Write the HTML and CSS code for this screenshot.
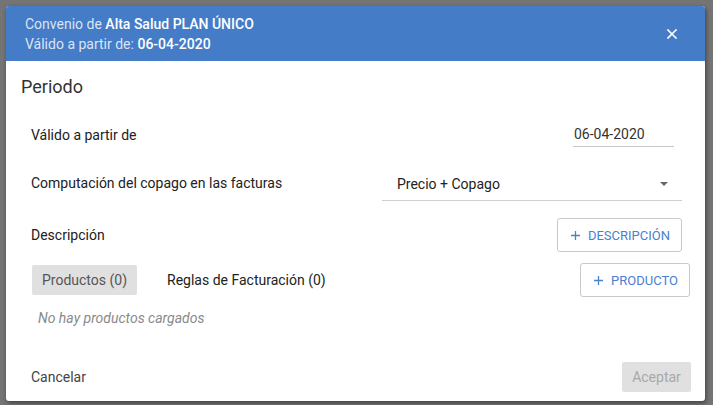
FILE: index.html
```html
<!DOCTYPE html>
<html lang="es">
<head>
<meta charset="utf-8">
<title>Convenio</title>
<link rel="stylesheet" href="styles.css">
</head>
<body>
<div class="dialog">
  <div class="header">
    <div class="header-text">
      <div class="line">Convenio de <strong>Alta Salud PLAN ÚNICO</strong></div>
      <div class="line">Válido a partir de: <strong>06-04-2020</strong></div>
    </div>
    <svg class="close" width="10" height="10" viewBox="0 0 10 10"><path d="M1 1L9 9M9 1L1 9" stroke="#fff" stroke-width="1.6" stroke-linecap="square"/></svg>
  </div>
  <div class="content">
    <div class="section-title">Periodo</div>
    <div class="row row-date">
      <div class="label">Válido a partir de</div>
      <div class="date-field">06-04-2020</div>
    </div>
    <div class="row row-select">
      <div class="label">Computación del copago en las facturas</div>
      <div class="select-field">
        <span>Precio + Copago</span>
        <svg class="caret" width="8" height="4" viewBox="0 0 8 4"><path d="M0 0H8L4 4Z" fill="#666"/></svg>
      </div>
    </div>
    <div class="row row-desc">
      <div class="label">Descripción</div>
      <button class="outline-btn"><svg class="plus" width="9" height="9" viewBox="0 0 9 9"><path d="M4.5 0V9M0 4.5H9" stroke="#4a80cc" stroke-width="1.3"/></svg>DESCRIPCIÓN</button>
    </div>
    <div class="row row-tabs">
      <div class="tabs">
        <div class="tab active">Productos (0)</div>
        <div class="tab">Reglas de Facturación (0)</div>
      </div>
      <button class="outline-btn"><svg class="plus" width="9" height="9" viewBox="0 0 9 9"><path d="M4.5 0V9M0 4.5H9" stroke="#4a80cc" stroke-width="1.3"/></svg>PRODUCTO</button>
    </div>
    <div class="empty">No hay productos cargados</div>
  </div>
  <div class="footer">
    <button class="text-btn">Cancelar</button>
    <button class="disabled-btn">Aceptar</button>
  </div>
</div>
</body>
</html>
```
FILE: styles.css
```css
* { box-sizing: border-box; }
html, body { margin: 0; padding: 0; }
body {
  background: #747474;
  padding: 6px;
  font-family: Roboto, "Liberation Sans", sans-serif;
  width: 713px;
  height: 405px;
  overflow: hidden;
}
.dialog {
  width: 699px;
  height: 395px;
  background: #fff;
  border-radius: 3px;
  box-shadow: 1px 2px 4px rgba(0,0,0,0.45);
  display: flex;
  flex-direction: column;
  overflow: hidden;
}
.header {
  height: 55px;
  background: #447cc7;
  display: flex;
  align-items: center;
  justify-content: space-between;
  padding: 0 28px 0 19px;
  flex: none;
}
.header-text {
  color: rgba(255,255,255,0.82);
  font-size: 14px;
  line-height: 20px;
}
.header-text strong { color: #fff; font-weight: 500; }
.close { display: block; }
.content {
  flex: 1;
  padding: 14px 0 0 25px;
}
.section-title {
  font-size: 18px;
  line-height: 24px;
  color: #333;
  margin-left: -10px;
}
.row {
  display: flex;
  align-items: center;
  justify-content: space-between;
}
.label {
  font-size: 14px;
  color: #212121;
}
.row-date {
  height: 48px;
  margin-top: 12px;
  padding-right: 31px;
}
.date-field {
  width: 101px;
  font-size: 14px;
  color: #333;
  padding: 0 0 4px 1px;
  border-bottom: 1px solid #c8c8c8;
  margin-top: 2px;
}
.row-select {
  height: 48px;
  padding-right: 23px;
}
.select-field {
  width: 300px;
  height: 34px;
  border-bottom: 1px solid #cfcfcf;
  display: flex;
  align-items: center;
  justify-content: space-between;
  padding: 0 14px 0 15px;
  font-size: 14px;
  color: #222;
  margin-top: 2px;
}
.caret { display: block; }
.row-desc {
  height: 34px;
  margin-top: 11px;
  padding-right: 23px;
}
.outline-btn {
  height: 34px;
  background: #fff;
  border: 1px solid #c9c9c9;
  border-radius: 3px;
  color: #4a80cc;
  font-family: inherit;
  font-size: 13px;
  padding: 0 11px 0 13px;
  display: flex;
  align-items: center;
}
.plus {
  display: block;
  margin-right: 8px;
  flex: none;
}
.row-tabs {
  height: 34px;
  margin-top: 11px;
  padding-right: 15px;
}
.tabs { display: flex; gap: 20px; margin-left: 1px; }
.tab {
  height: 30px;
  display: flex;
  align-items: center;
  padding: 0 10px;
  font-size: 14px;
  color: #222;
  border-radius: 2px;
}
.tab.active { background: #e0e0e0; color: #555; }
.empty {
  margin: 13px 0 0 7px;
  font-size: 14px;
  font-style: italic;
  color: #8a8a8a;
}
.footer {
  flex: none;
  height: 40px;
  margin-bottom: 4px;
  display: flex;
  align-items: center;
  justify-content: space-between;
  padding: 0 14px 0 25px;
}
.text-btn {
  background: none;
  border: none;
  padding: 0;
  font-family: inherit;
  font-size: 14px;
  color: #444;
}
.disabled-btn {
  height: 30px;
  width: 69px;
  background: #e0e0e0;
  border: none;
  border-radius: 2px;
  font-family: inherit;
  font-size: 14px;
  color: #a8a8a8;
  padding: 0;
}
```
